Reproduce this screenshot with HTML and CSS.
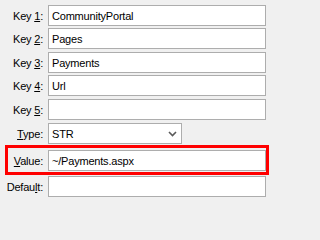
FILE: index.html
```html
<!DOCTYPE html>
<html>
<head>
<meta charset="utf-8">
<link rel="stylesheet" href="styles.css">
</head>
<body>
<div class="form">
  <div class="row r1"><span class="label">Key <u>1</u>:</span><div class="field">CommunityPortal</div></div>
  <div class="row r2"><span class="label">Key <u>2</u>:</span><div class="field">Pages</div></div>
  <div class="row r3"><span class="label">Key <u>3</u>:</span><div class="field">Payments</div></div>
  <div class="row r2"><span class="label">Key <u>4</u>:</span><div class="field">Url</div></div>
  <div class="row r3"><span class="label">Key <u>5</u>:</span><div class="field"></div></div>
  <div class="row r3"><span class="label"><u>T</u>ype:</span>
    <div class="field combo"><span>STR</span>
      <svg class="chev" width="9" height="6" viewBox="0 0 9 6"><path d="M1 1 L4.5 4.5 L8 1" fill="none" stroke="#5a5a5a" stroke-width="1.6"/></svg>
    </div>
  </div>
  <div class="row highlight"><span class="label"><u>V</u>alue:</span><div class="field">~/Payments.aspx</div></div>
  <div class="row r1b"><span class="label">Defau<u>l</u>t:</span><div class="field"></div></div>
</div>
</body>
</html>
```
FILE: styles.css
```css
html, body {
  margin: 0;
  padding: 0;
  background: #f0f0f0;
}
body {
  font-family: "Liberation Sans", Arial, sans-serif;
  font-size: 11px;
  letter-spacing: -0.2px;
  color: #000;
  width: 271px;
  height: 202px;
  overflow: hidden;
}
.form {
  display: flex;
  flex-direction: column;
  padding-top: 5px;
}
.row {
  display: flex;
  align-items: center;
  gap: 5px;
  height: 21px;
}
.r2 { margin-top: 2px; }
.r3 { margin-top: 3px; }
.r1b { margin-top: 1px; }
.label {
  width: 43px;
  text-align: right;
  white-space: nowrap;
}
.label u {
  text-underline-offset: 1px;
}
.field {
  width: 218px;
  height: 21px;
  box-sizing: border-box;
  border: 1px solid #adadad;
  background: #fff;
  padding-left: 3px;
  display: flex;
  align-items: center;
  white-space: nowrap;
}
.combo {
  width: 134px;
  justify-content: space-between;
  padding-right: 4px;
}
.chev {
  display: block;
}
.highlight {
  margin-top: 1px;
  margin-left: 5px;
  width: 258px;
  height: auto;
  border: 3px solid #ff0000;
  padding: 2px 0 1px 0;
}
.highlight .label {
  width: 35px;
}
```
